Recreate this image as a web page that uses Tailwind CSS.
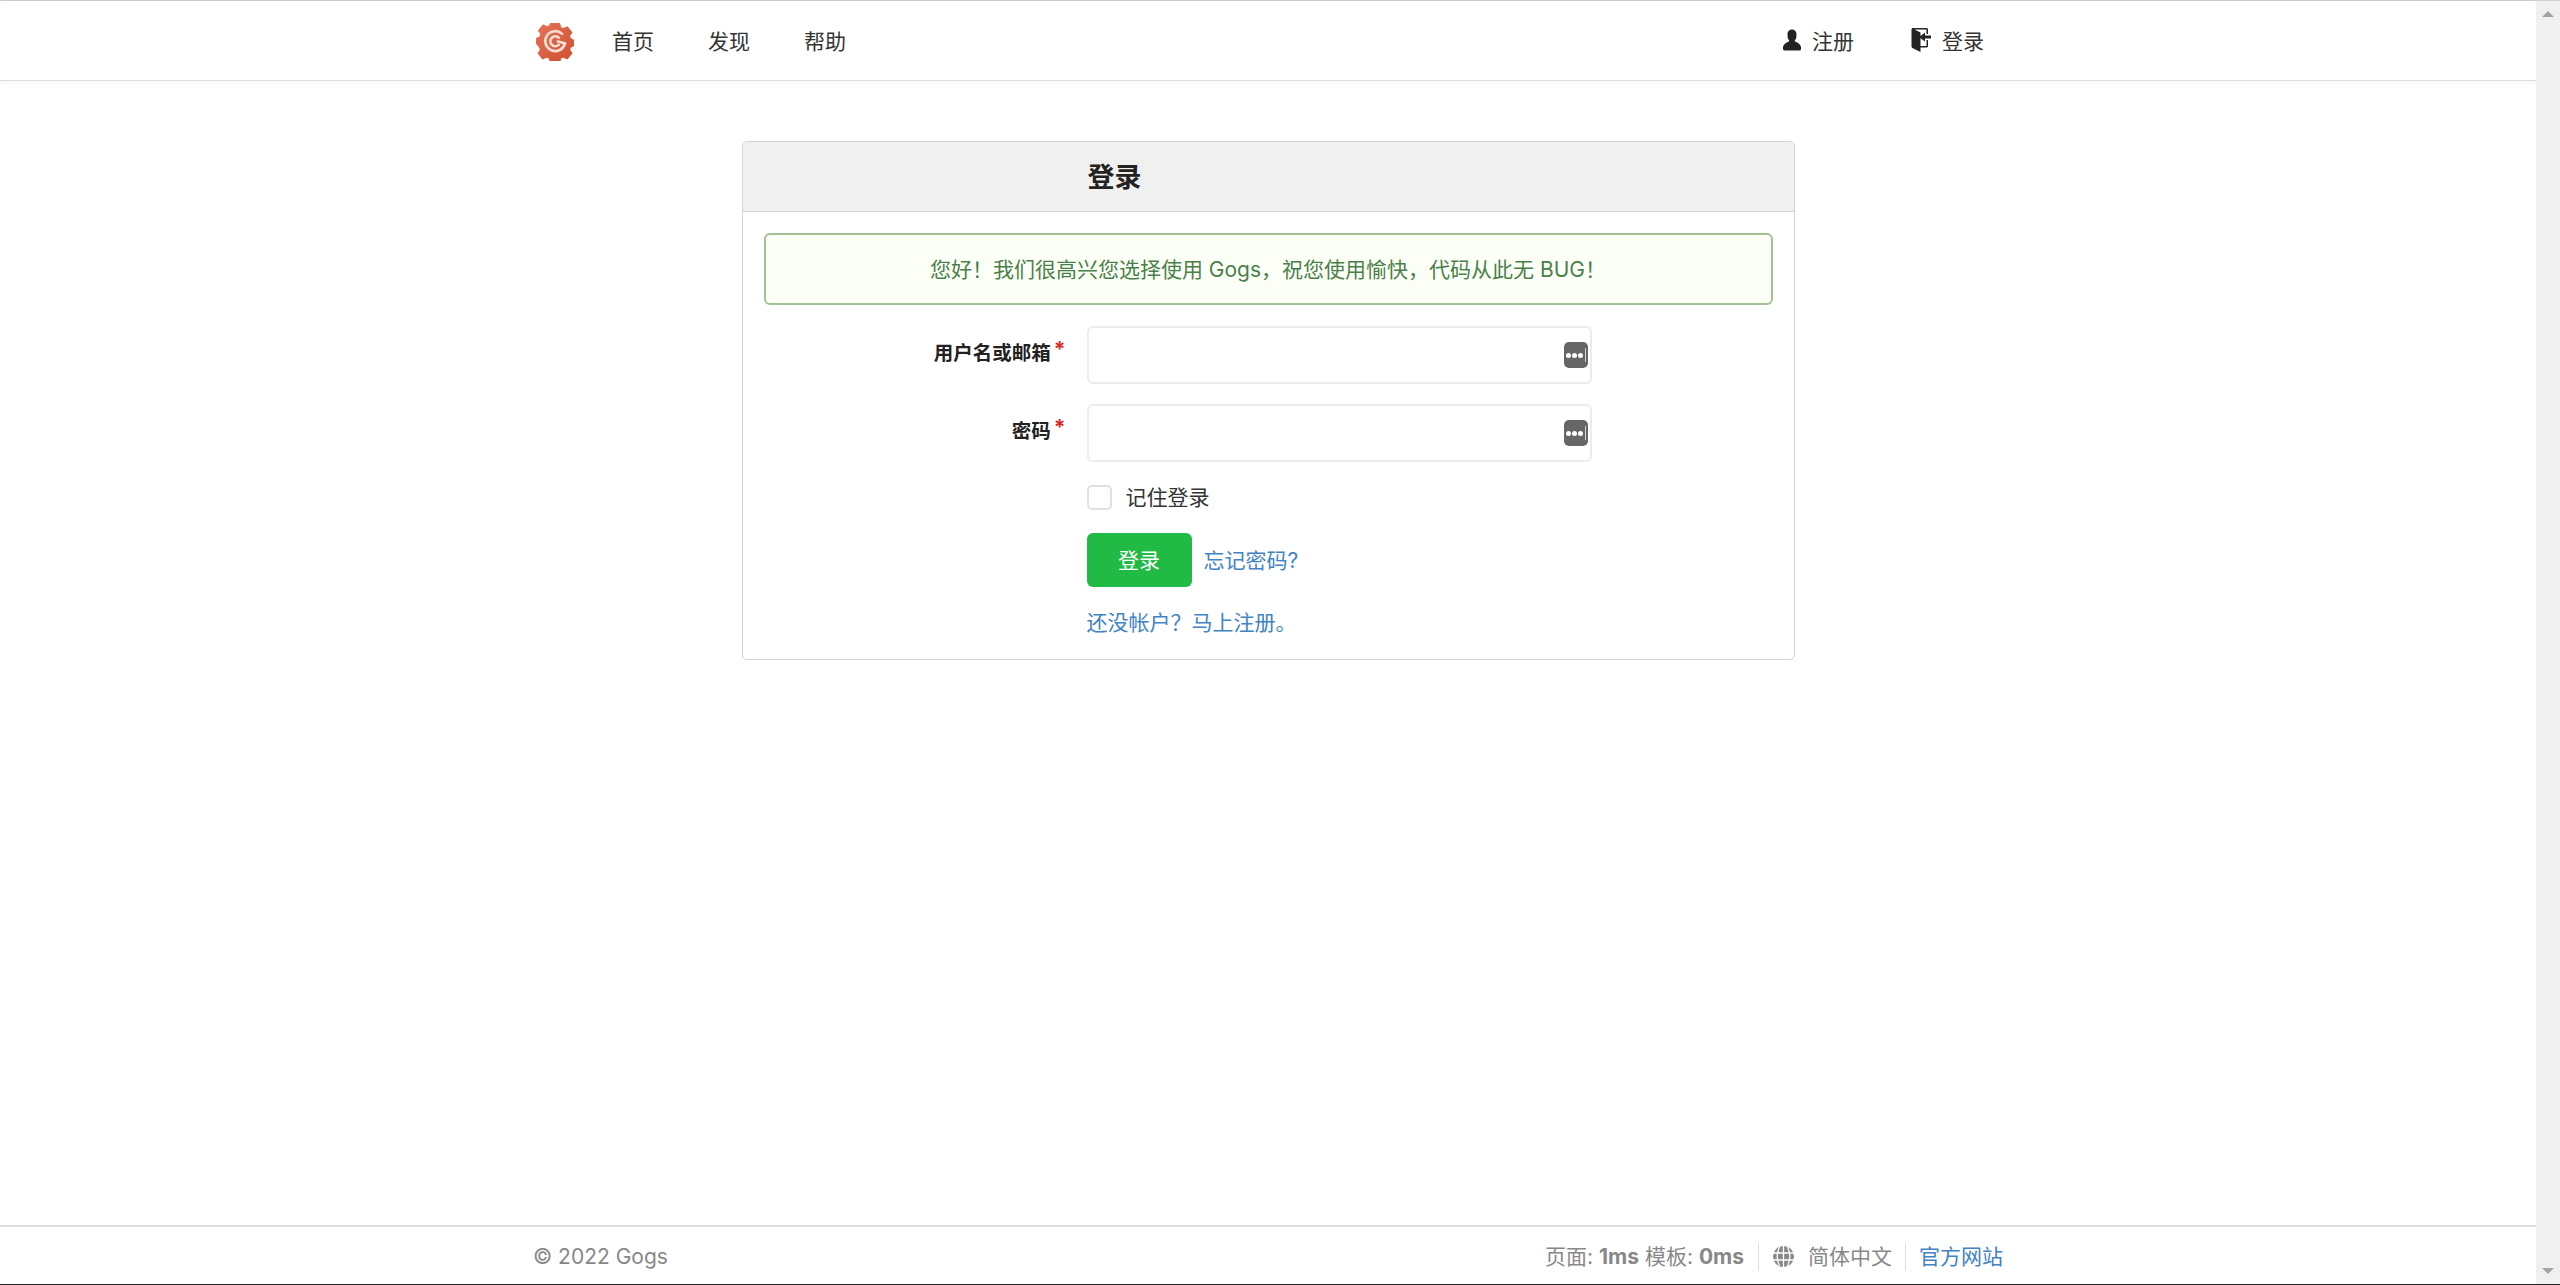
<!DOCTYPE html>
<html lang="zh-CN">
<head>
    <meta charset="UTF-8">
    <title>登录 - Gogs</title>
    <script src="https://cdn.jsdelivr.net/npm/@tailwindcss/browser@4"></script>
</head>
<body class="bg-white overflow-hidden font-['Inter','Noto_Sans_CJK_SC',sans-serif] text-[21px] text-[#333]">
    <div class="h-[1285px] flex flex-col">
        <div class="h-px bg-[#d0d0d0]"></div>
        <div class="flex flex-1 min-h-0">
            <div class="flex-1 flex flex-col min-w-0">
                <!-- Top bar -->
                <header class="h-[80px] shrink-0 border-b border-[#dedede] shadow-[0_2px_6px_rgba(0,0,0,0.04)]">
                    <div class="w-[1470px] mx-auto h-full flex items-center justify-between pt-[2px]">
                        <div class="flex items-center">
                            <svg class="w-[38px] h-[40px] ml-[3px] -mt-[1px] blur-[0.6px]" viewBox="0 0 40 40">
                                <defs>
                                    <linearGradient id="gear" x1="0" y1="0" x2="1" y2="1">
                                        <stop offset="0" stop-color="#e57255"/>
                                        <stop offset="1" stop-color="#cf4f30"/>
                                    </linearGradient>
                                </defs>
                                <path fill="url(#gear)" stroke="url(#gear)" stroke-width="2" stroke-linejoin="round" d="M15.500 2h9l1.200 4.200 3.200 1.400 3.900-2 4.500 5.500-2.400 3.400 1 3.300 3.600 1.700v5l-3.600 1.700-1 3.300 2.400 3.400-4.500 5.500-3.900-2-3.200 1.400-1.200 4.200h-9l-1.200-4.200-3.200-1.400-3.900 2-4.500-5.500 2.400-3.400-1-3.300L1 22.500v-5l3.600-1.700 1-3.300-2.400-3.400 4.500-5.500 3.900 2 3.200-1.400z"/>
                                <path fill="none" stroke="#f8dcd2" stroke-width="2.800" stroke-linecap="round" d="M27.500 12.500a10.500 10.500 0 1 0 3 10"/>
                                <path fill="none" stroke="#f8dcd2" stroke-width="2.800" stroke-linecap="round" d="M24 16.500a5.200 5.200 0 1 0 0 7.500"/>
                                <path fill="none" stroke="#f8dcd2" stroke-width="2.800" stroke-linecap="round" d="M23 20.500l7.500 2"/>
                            </svg>
                            <nav class="flex items-center gap-[54px] ml-[38px]">
                                <a>首页</a>
                                <a>发现</a>
                                <a>帮助</a>
                            </nav>
                        </div>
                        <div class="flex items-center gap-[56px] mr-[19px]">
                            <a class="flex items-center gap-[11px]">
                                <svg class="w-[18px] h-[24px] fill-[#222] -mt-[4px]" viewBox="0 0 12 16"><path d="M12 14.002a.998.998 0 0 1-.998.998H1.001A1 1 0 0 1 0 13.999V13c0-2.633 4-4 4-4s.229-.409 0-1c-.841-.62-.944-1.59-1-4 .173-2.413 1.867-3 3-3s2.827.586 3 3c-.056 2.41-.159 3.38-1 4-.229.59 0 1 0 1s4 1.367 4 4v1.002z"/></svg>
                                <span>注册</span>
                            </a>
                            <a class="flex items-center gap-[11px]">
                                <svg class="w-[21px] h-[24px] fill-[#222] -mt-[4px]" viewBox="0 0 14 16"><path d="M7 6.750V12h4V8h1v4c0 .55-.45 1-1 1H7v3l-5.450-2.720c-.33-.17-.55-.52-.55-.88V1c0-.55.45-1 1-1h9c.55 0 1 .45 1 1v3h-1V1H3l4 2v2.250L10 3v2h4v2h-4v2L7 6.750z"/></svg>
                                <span>登录</span>
                            </a>
                        </div>
                    </div>
                </header>

                <!-- Sign in card -->
                <main class="flex-1 pt-[60px]">
                    <div class="w-[1053px] mx-auto border border-[#d4d4d5] rounded-[5px] overflow-hidden">
                        <h3 class="h-[70px] bg-[#f0f0f0] border-b border-[#d4d4d5] pl-[345px] pt-[4px] flex items-center text-[27px] font-bold text-[#222]">登录</h3>
                        <div class="px-[21px] pt-[21px] pb-[20px]">
                            <div class="h-[72px] flex items-center justify-center pt-[1px] border-2 border-[#a3c293] rounded-[6px] bg-[#fcfff5] text-[#4a7f4b]">您好！我们很高兴您选择使用 Gogs，祝您使用愉快，代码从此无 BUG！</div>

                            <div class="flex items-center mt-[21px]">
                                <label class="w-[306px] pr-[4px] pb-[3px] flex justify-end text-[19.500px] leading-[29px] font-bold text-[#222]">用户名或邮箱<span class="text-[#db2828] text-[21px] leading-[29px] ml-[3px] -mt-[4px]">*</span></label>
                                <div class="relative w-[505px] h-[58px] ml-[17px] border-2 border-[#ececec] rounded-[6px]">
                                    <div class="absolute right-[2px] top-[14px] w-[24px] h-[26px] rounded-[5px] bg-[#666] flex items-center pl-[2px] gap-[1px]">
                                        <i class="w-[5px] h-[5px] rounded-full bg-white"></i><i class="w-[5px] h-[5px] rounded-full bg-white"></i><i class="w-[5px] h-[5px] rounded-full bg-white"></i><i class="w-px h-[14px] ml-[1px] bg-white/70"></i>
                                    </div>
                                </div>
                            </div>

                            <div class="flex items-center mt-[20px]">
                                <label class="w-[306px] pr-[4px] pb-[3px] flex justify-end text-[19.500px] leading-[29px] font-bold text-[#222]">密码<span class="text-[#db2828] text-[21px] leading-[29px] ml-[3px] -mt-[4px]">*</span></label>
                                <div class="relative w-[505px] h-[58px] ml-[17px] border-2 border-[#ececec] rounded-[6px]">
                                    <div class="absolute right-[2px] top-[14px] w-[24px] h-[26px] rounded-[5px] bg-[#666] flex items-center pl-[2px] gap-[1px]">
                                        <i class="w-[5px] h-[5px] rounded-full bg-white"></i><i class="w-[5px] h-[5px] rounded-full bg-white"></i><i class="w-[5px] h-[5px] rounded-full bg-white"></i><i class="w-px h-[14px] ml-[1px] bg-white/70"></i>
                                    </div>
                                </div>
                            </div>

                            <div class="ml-[323px]">
                                <div class="flex items-center mt-[22px] h-[26px]">
                                    <span class="w-[25px] h-[25px] border-2 border-[#e0e0e0] rounded-[5px]"></span>
                                    <span class="ml-[14px] pt-[1px]">记住登录</span>
                                </div>
                                <div class="flex items-center mt-[23px]">
                                    <button class="w-[105px] h-[54px] rounded-[6px] bg-[#21ba45] text-white pt-[1px]">登录</button>
                                    <a class="ml-[12px] pt-[1px] text-[#4183c4]">忘记密码?</a>
                                </div>
                                <a class="block mt-[20px] text-[#4183c4]">还没帐户？马上注册。</a>
                            </div>
                        </div>
                    </div>
                </main>

                <!-- Footer -->
                <footer class="h-[59px] shrink-0 border-t-2 border-[#dedede] text-[#888]">
                    <div class="w-[1470px] mx-auto h-full flex items-center justify-between pt-[2px]">
                        <span>© 2022 Gogs</span>
                        <div class="flex items-center">
                            <span>页面: <b>1ms</b> 模板: <b>0ms</b></span>
                            <span class="w-px h-[28px] bg-[#ddd] ml-[14px]"></span>
                            <svg class="w-[21px] h-[21px] ml-[14px]" viewBox="0 0 21 21">
                                <circle cx="10.500" cy="10.500" r="10.500" fill="#888"/>
                                <path fill="none" stroke="#fff" stroke-width="1.300" d="M0 7h21M0 14h21M10.500 0v21M6.500 1C3.500 7 3.500 14 6.500 20M14.500 1c3 6 3 13 0 19"/>
                            </svg>
                            <span class="ml-[14px]">简体中文</span>
                            <span class="w-px h-[28px] bg-[#ddd] ml-[13px]"></span>
                            <a class="ml-[13px] text-[#4183c4]">官方网站</a>
                        </div>
                    </div>
                </footer>
            </div>

            <!-- Scrollbar -->
            <div class="w-[24px] shrink-0 bg-[#f0f0f0] flex flex-col justify-between items-center py-[10px]">
                <span class="w-0 h-0 border-x-[6px] border-x-transparent border-b-[6px] border-b-[#a3a3a3]"></span>
                <span class="w-0 h-0 border-x-[6px] border-x-transparent border-t-[6px] border-t-[#a3a3a3]"></span>
            </div>
        </div>
        <div class="h-px bg-[#222]"></div>
    </div>
</body>
</html>
